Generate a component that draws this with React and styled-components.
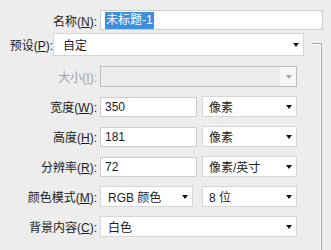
import React from "react";
import styled, { createGlobalStyle } from "styled-components";

const GlobalStyle = createGlobalStyle`
  body {
    margin: 0;
    background: #ededed;
    font-family: "Liberation Sans", "Noto Sans CJK SC", sans-serif;
    font-size: 12px;
    color: #1c1c1c;
  }
`;

const Dialog = styled.div`
  width: 331px;
  height: 250px;
  overflow: hidden;
  padding-top: 10px;
  box-sizing: border-box;
`;

const Row = styled.div`
  display: flex;
  align-items: center;
  height: ${(p) => p.h || 21}px;
`;

const Label = styled.label`
  width: ${(p) => (p.w ? `${p.w}px` : "auto")};
  padding-left: ${(p) => p.pl || 0}px;
  margin-right: ${(p) => (p.mr != null ? p.mr : 3)}px;
  text-align: right;
  white-space: nowrap;
  color: ${(p) => (p.disabled ? "#a3a3a3" : "#1c1c1c")};
  flex-shrink: 0;
`;

const TextBox = styled.div`
  width: ${(p) => p.w}px;
  height: ${(p) => p.h || 20}px;
  box-sizing: border-box;
  background: #fff;
  border: 1px solid #cdcdcd;
  display: flex;
  align-items: center;
  padding-left: 4px;
  flex-shrink: 0;
`;

const Selected = styled.span`
  background: #3d8de0;
  color: #fff;
  padding: 1px 1px;
  line-height: 15px;
`;

const SelectBox = styled.div`
  position: relative;
  width: ${(p) => p.w}px;
  height: ${(p) => p.h || 21}px;
  box-sizing: border-box;
  margin-left: ${(p) => p.ml || 0}px;
  background: ${(p) => (p.disabled ? "#ececec" : "#fff")};
  border: 1px solid ${(p) => (p.disabled ? "#bcbcbc" : "#d6d6d6")};
  display: flex;
  align-items: center;
  padding-left: ${(p) => p.pl || 6}px;
  flex-shrink: 0;
`;

const ArrowCell = styled.div`
  position: absolute;
  top: 0;
  right: 0;
  bottom: 0;
  width: 16px;
  display: flex;
  align-items: center;
  justify-content: center;
  background: ${(p) => (p.disabled ? "#f6f6f6" : "transparent")};
  &::after {
    content: "";
    border-left: 3.5px solid transparent;
    border-right: 3.5px solid transparent;
    border-top: 4px solid ${(p) => (p.disabled ? "#a8a8a8" : "#111")};
    margin-left: 1px;
  }
`;

const Main = styled.div`
  display: flex;
  margin-top: 3px;
`;

const LeftCol = styled.div`
  width: 304px;
  display: flex;
  flex-direction: column;
`;

const Fields = styled.div`
  display: flex;
  flex-direction: column;
  gap: 9px;
  padding-top: 10px;
`;

const Bracket = styled.div`
  width: 9px;
  margin-left: 8px;
  margin-top: 10px;
  height: 260px;
  border-top: 1px solid #a6a6a6;
  border-right: 1px solid #a6a6a6;
  box-shadow: inset -1px 1px 0 #fafafa;
`;

const Select = ({ children, ...rest }) => (
  <SelectBox {...rest}>
    {children}
    <ArrowCell disabled={rest.disabled} />
  </SelectBox>
);

const FieldLabel = ({ text, k, disabled }) => (
  <Label w={97} disabled={disabled}>
    {text}(<u>{k}</u>):
  </Label>
);

export default function App() {
  return (
    <Dialog>
      <GlobalStyle />
      <Row h={20}>
        <FieldLabel text="名称" k="N" />
        <TextBox w={223}>
          <Selected>未标题-1</Selected>
        </TextBox>
      </Row>
      <Main>
        <LeftCol>
          <Row h={23}>
            <Label pl={6} mr={0} style={{ width: 47 }}>
              预设(<u>P</u>):
            </Label>
            <Select w={251} h={23} pl={9}>
              自定
            </Select>
          </Row>
          <Fields>
            <Row>
              <FieldLabel text="大小" k="I" disabled />
              <Select w={197} disabled />
            </Row>
            <Row>
              <FieldLabel text="宽度" k="W" />
              <TextBox w={97}>350</TextBox>
              <Select w={95} ml={5}>像素</Select>
            </Row>
            <Row>
              <FieldLabel text="高度" k="H" />
              <TextBox w={97}>181</TextBox>
              <Select w={95} ml={5}>像素</Select>
            </Row>
            <Row>
              <FieldLabel text="分辨率" k="R" />
              <TextBox w={97}>72</TextBox>
              <Select w={95} ml={5}>像素/英寸</Select>
            </Row>
            <Row>
              <FieldLabel text="颜色模式" k="M" />
              <Select w={93} pl={7}>RGB 颜色</Select>
              <Select w={95} ml={9}>8 位</Select>
            </Row>
            <Row>
              <FieldLabel text="背景内容" k="C" />
              <Select w={197} pl={7}>白色</Select>
            </Row>
          </Fields>
        </LeftCol>
        <Bracket />
      </Main>
    </Dialog>
  );
}
